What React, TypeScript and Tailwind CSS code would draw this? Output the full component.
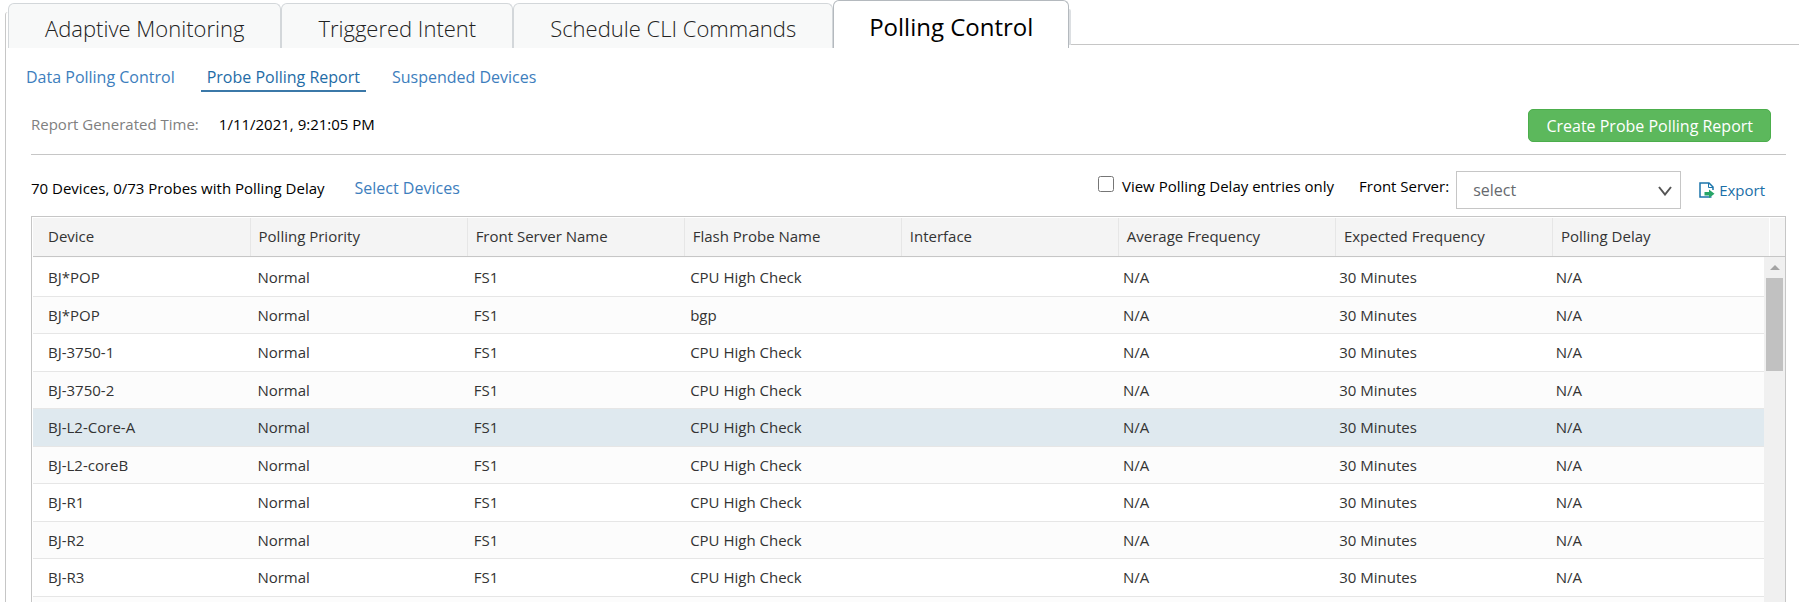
import { useState } from 'react';
import clsx from 'clsx';

const tabs = ['Adaptive Monitoring', 'Triggered Intent', 'Schedule CLI Commands', 'Polling Control'];

const subTabs = ['Data Polling Control', 'Probe Polling Report', 'Suspended Devices'];

const columns = [
  'Device',
  'Polling Priority',
  'Front Server Name',
  'Flash Probe Name',
  'Interface',
  'Average Frequency',
  'Expected Frequency',
  'Polling Delay',
];

const devices = [
  { name: 'BJ*POP', probe: 'CPU High Check' },
  { name: 'BJ*POP', probe: 'bgp' },
  { name: 'BJ-3750-1', probe: 'CPU High Check' },
  { name: 'BJ-3750-2', probe: 'CPU High Check' },
  { name: 'BJ-L2-Core-A', probe: 'CPU High Check' },
  { name: 'BJ-L2-coreB', probe: 'CPU High Check' },
  { name: 'BJ-R1', probe: 'CPU High Check' },
  { name: 'BJ-R2', probe: 'CPU High Check' },
  { name: 'BJ-R3', probe: 'CPU High Check' },
];

function ExportIcon() {
  return (
    <svg viewBox="0 0 16 16" className="w-4 h-4" fill="none">
      <path d="M12.500 15H1V1h9l4 4v3" stroke="#1b74ab" strokeWidth="1.5" />
      <path d="M9.500 1v4.500H14" stroke="#1b74ab" strokeWidth="1" />
      <path d="M5.500 10H10V7.500l5.500 4.250L10 16v-2.500H5.500z" fill="#27a567" />
    </svg>
  );
}

export default function App() {
  const [activeTab, setActiveTab] = useState('Polling Control');
  const [activeSub, setActiveSub] = useState('Probe Polling Report');
  const [selected, setSelected] = useState(4);
  const [delayOnly, setDelayOnly] = useState(false);

  return (
    <div className="h-screen overflow-hidden flex flex-col bg-white text-black text-[15px] leading-5 font-['Open_Sans',sans-serif]">
      {/* Main tabs */}
      <div className="flex h-12 shrink-0 pl-[5px]">
        <div className="w-[3px] mt-3 border-l border-[#c8c8c8] rounded-tl" />
        {tabs.map(tab => (
          <button
            key={tab}
            onClick={() => setActiveTab(tab)}
            className={clsx(
              'border border-b-0 rounded-t-md whitespace-nowrap',
              tab === activeTab
                ? 'px-[35px] bg-white border-[#b4b9be] text-black text-[24px] pt-1'
                : 'px-9 mt-[3px] bg-[#f8f9f9] border-[#d3d7da] text-[#222] text-[22px] font-light pt-[3px]'
            )}
          >
            {tab}
          </button>
        ))}
        <div className="w-0.5 h-9 mt-[9px] bg-[#dcdfe2] rounded-tr" />
        <div className="grow h-[45px] border-b border-[#c6c6c6]" />
      </div>

      <div className="grow min-h-0 flex flex-col ml-[5px] border-l border-[#c6c6c6] pl-[25px] pr-[13px]">
        {/* Sub tabs */}
        <div className="flex shrink-0 gap-5 -ml-[11px] pt-4 text-base">
          {subTabs.map(sub => (
            <button
              key={sub}
              onClick={() => setActiveSub(sub)}
              className={clsx(
                'h-7 px-1.5 pb-px border-b-2 whitespace-nowrap',
                sub === activeSub ? 'border-[#3b78a8] text-[#1f6ca6]' : 'border-transparent text-[#3d7ebd]'
              )}
            >
              {sub}
            </button>
          ))}
        </div>

        <div className="flex shrink-0 items-center h-[63px] pt-0.5 pr-[15px] border-b border-[#c6c6c6]">
          <span className="text-[#808080] mr-5">Report Generated Time:</span>
          <span>1/11/2021, 9:21:05 PM</span>
          <button className="ml-auto mt-[3px] h-[33px] px-[17px] rounded-[5px] bg-[#5cb85c] border border-[#4cae4c] text-white text-base">
            Create Probe Polling Report
          </button>
        </div>

        {/* Toolbar */}
        <div className="flex shrink-0 items-center h-[61px] pt-1 pr-[21px]">
          <span className="mr-[30px]">70 Devices, 0/73 Probes with Polling Delay</span>
          <a href="#" className="text-base text-[#3d7ebd]">Select Devices</a>
          <input
            id="delay-only"
            type="checkbox"
            checked={delayOnly}
            onChange={e => setDelayOnly(e.target.checked)}
            className="w-4 h-4 ml-auto mb-2"
          />
          <label htmlFor="delay-only" className="ml-2 mr-[25px] mb-1">View Polling Delay entries only</label>
          <label htmlFor="front-server" className="mb-1">Front Server:</label>
          <div className="relative ml-[7px] mt-1">
            <select
              id="front-server"
              className="appearance-none w-[225px] h-[38px] pl-4 border border-[#c6c6c6] bg-white text-base text-[#66696e]"
            >
              <option>select</option>
            </select>
            <svg viewBox="0 0 14 10" className="absolute right-[9px] top-[15px] w-[14px] h-[10px] pointer-events-none" fill="none">
              <path d="M1 1l6 7.500l6-7.500" stroke="#555" strokeWidth="2" />
            </svg>
          </div>
          <a href="#" className="flex items-center gap-1 ml-[18px] mt-1 text-[#1b6fa8]">
            <ExportIcon />
            Export
          </a>
        </div>

        <div className="grow min-h-0 flex flex-col border border-b-0 border-[#c6c6c6] pl-px text-[#333]">
          <div className="flex shrink-0 pt-px border-b border-[#c6c6c6]">
            <div className="grow">
              <table className="w-full table-fixed bg-[#f4f4f4]">
                <thead>
                  <tr className="h-[38px]">
                    {columns.map(col => (
                      <th key={col} className="pl-2 first:pl-[15px] pb-0.5 text-left font-normal border-r border-[#e6e6e6] last:border-white">
                        {col}
                      </th>
                    ))}
                  </tr>
                </thead>
              </table>
            </div>
            <div className="w-[15px] shrink-0 bg-[#f4f4f4]" />
          </div>

          <div className="grow min-h-0 flex">
            <div className="grow pt-px overflow-hidden bg-[#fcfcfc]">
              <table className="w-full table-fixed">
                <tbody>
                  {devices.map((device, i) => (
                    <tr
                      key={i}
                      onClick={() => setSelected(i)}
                      className={clsx(
                        'h-[38px] even:h-[37px] border-b border-[#e6e6e6]',
                        i === selected ? 'bg-[#dfe9ef]' : 'odd:bg-white'
                      )}
                    >
                      <td className="pl-[15px]">{device.name}</td>
                      <td className="pl-2">Normal</td>
                      <td className="pl-2">FS1</td>
                      <td className="pl-2">{device.probe}</td>
                      <td className="pl-2"></td>
                      <td className="pl-2">N/A</td>
                      <td className="pl-2">30 Minutes</td>
                      <td className="pl-2">N/A</td>
                    </tr>
                  ))}
                </tbody>
              </table>
            </div>
            <div className="w-[21px] shrink-0 flex flex-col items-center bg-[#f0f0f0]">
              <svg viewBox="0 0 10 5" className="w-[10px] h-[5px] my-2" fill="#a3a3a3">
                <path d="M0 5L5 0l5 5z" />
              </svg>
              <div className="w-[17px] h-[93px] bg-[#c1c1c1]" />
            </div>
          </div>
        </div>
      </div>
    </div>
  );
}
